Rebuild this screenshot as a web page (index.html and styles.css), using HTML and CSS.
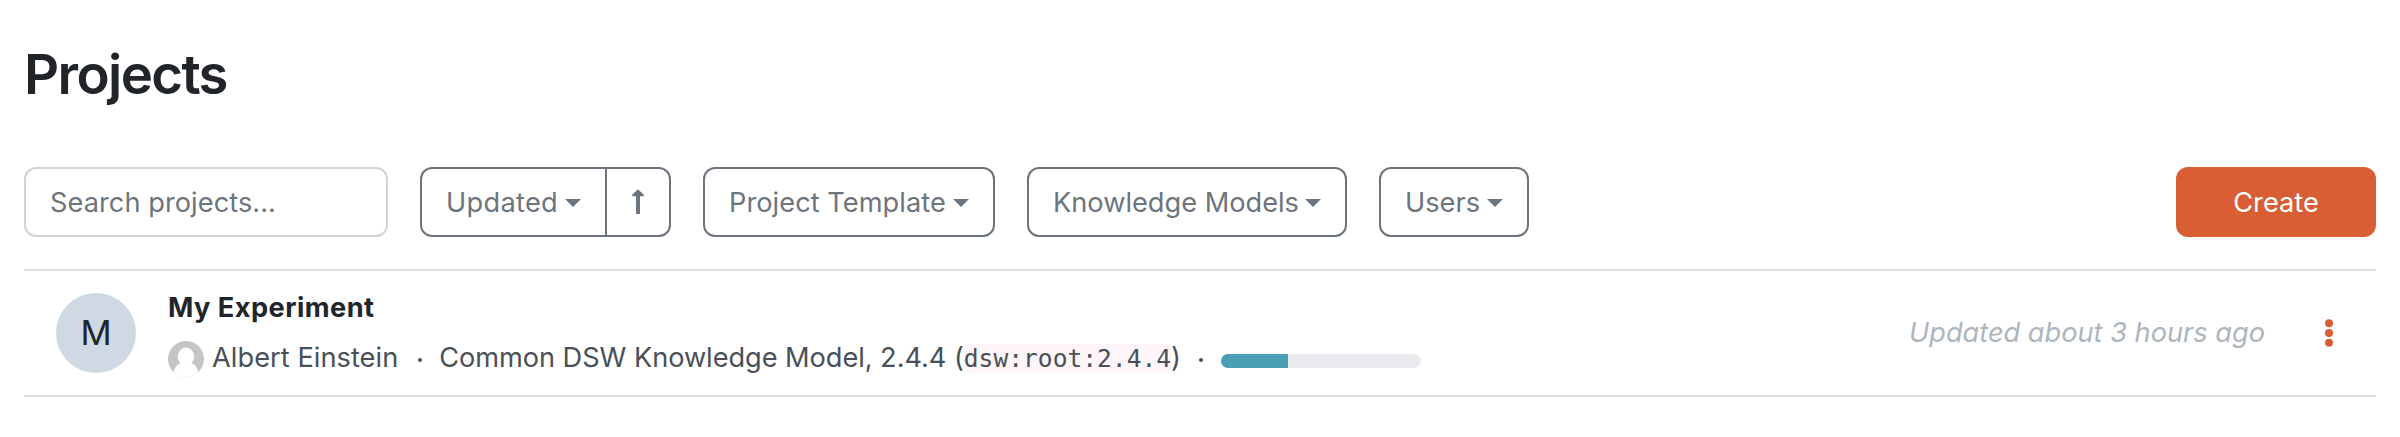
FILE: index.html
```html
<!DOCTYPE html>
<html lang="en">
<head>
<meta charset="utf-8">
<title>Projects</title>
<link rel="stylesheet" href="styles.css">
</head>
<body>
<main class="page">
  <h1 class="title">Projects</h1>
  <div class="toolbar">
    <div class="search">Search projects...</div>
    <div class="group">
      <div class="btn sort"><span>Updated</span><i class="caret"></i></div>
      <div class="btn direction"><svg class="arrow" width="14" height="26" viewBox="0 0 14 26"><path d="M7 .3 12.800 5.800Q13.200 7.300 12 7.300H9V24.300Q9 25 8.200 25H5.800Q5 25 5 24.300V7.300H2Q.8 7.300 1.200 5.800z"/></svg></div>
    </div>
    <div class="btn template"><span>Project Template</span><i class="caret"></i></div>
    <div class="btn models"><span>Knowledge Models</span><i class="caret"></i></div>
    <div class="btn users"><span>Users</span><i class="caret"></i></div>
    <div class="create">Create</div>
  </div>
  <div class="item">
    <div class="avatar">M</div>
    <div class="content">
      <div class="name">My Experiment</div>
      <div class="meta">
        <svg class="user" width="36" height="36" viewBox="0 0 36 36"><defs><clipPath id="round"><circle cx="18" cy="18" r="18"/></clipPath></defs><g clip-path="url(#round)"><path fill="#c5c5c5" d="M0 0h36v36H0z"/><ellipse cx="18" cy="15.500" rx="8.200" ry="9" fill="#fff"/><path fill="#fff" d="M13.500 20h9v1.800C27.500 23.500 30 27 31.500 36h-27C6 27 8.500 23.500 13.500 21.800z"/></g></svg>
        <span class="person">Albert Einstein</span>
        <span class="dot"></span>
        <span class="km">Common DSW Knowledge Model, 2.4.4 (</span><code class="code">dsw:root:2.4.4</code><span class="paren">)</span>
        <span class="dot second"></span>
        <div class="progress"><div class="bar"></div></div>
      </div>
    </div>
    <div class="updated">Updated about 3 hours ago</div>
    <svg class="menu" width="8" height="28" viewBox="0 0 8 28"><circle cx="4" cy="4.200" r="4"/><circle cx="4" cy="14" r="4"/><circle cx="4" cy="23.800" r="4"/></svg>
  </div>
</main>
</body>
</html>
```
FILE: styles.css
```css
* { box-sizing: border-box; }
body { margin: 0; background: #fff; color: #212529; font: 27.2px/42px Inter, "Liberation Sans", sans-serif; }
.page { padding: 41px 24px 0; }
.title { margin: 0; height: 126px; font-size: 54.5px; line-height: 67px; font-weight: 570; letter-spacing: -1.6px; }
.toolbar { display: flex; gap: 32px; height: 70px; }
.search, .btn { display: flex; align-items: center; height: 70px; border: 2px solid #6c757d; border-radius: 12px; padding: 1px 24px 0; color: #6c757d; white-space: nowrap; }
.search { width: 364px; border-color: #ced4da; letter-spacing: 0.05px; }
.group { display: flex; }
.btn { justify-content: space-between; }
.sort { width: 187px; border-radius: 12px 0 0 12px; letter-spacing: 0.3px; }
.direction { width: 66px; margin-left: -2px; border-radius: 0 12px 12px 0; justify-content: center; padding: 0; }
.arrow { fill: #6c757d; }
.template { width: 292px; letter-spacing: 0.05px; }
.models { width: 320px; }
.users { width: 150px; }
.caret { margin-top: 1px; border: 8px solid transparent; border-top-color: #6c757d; border-bottom: 0; }
.create { display: flex; align-items: center; justify-content: center; width: 200px; margin-left: auto; padding-top: 1px; border-radius: 12px; background: #d95e34; color: #fff; }
.item { display: flex; align-items: center; height: 128px; margin-top: 32px; border: solid #dedede; border-width: 2px 0; padding-left: 32px; }
.avatar { display: flex; align-items: center; justify-content: center; width: 80px; height: 80px; border-radius: 50%; background: #cfd9e4; font-size: 34.5px; }
.content { align-self: flex-start; margin: 16px 0 0 32px; }
.name { font-weight: 700; letter-spacing: 0.45px; }
.meta { display: flex; align-items: center; height: 50px; margin-top: 4px; color: #495057; white-space: pre; }
.user { margin-top: 2px; }
.person { margin-left: 8px; letter-spacing: 0.05px; }
.dot { width: 4px; height: 4px; border-radius: 50%; background: #495057; margin: 3px 17.5px 0 19.4px; }
.second { margin: 3px 18px 0; }
.km { letter-spacing: -0.05px; }
.code { font: 24.6px/29px "DejaVu Sans Mono", monospace; background: #fdf5f8; }
.progress { width: 200px; height: 14px; margin-top: 6px; border-radius: 7px; background: #e9ebef; overflow: hidden; }
.bar { width: 67px; height: 14px; background: #4a9fb4; }
.updated { margin-left: auto; color: #adb5bd; font-style: italic; }
.menu { margin: 0 43px 0 60px; fill: #d95e34; }
```
